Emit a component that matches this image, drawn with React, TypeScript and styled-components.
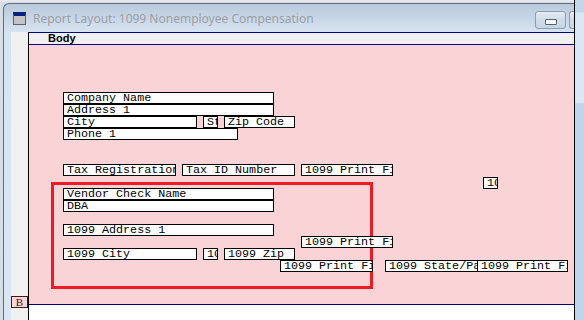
import { FC } from 'react';
import styled, { createGlobalStyle } from 'styled-components';

interface FieldData {
  text: string;
  x: number;
  y: number;
  w: number;
}

// positions are relative to the pink body section of the designer
const fields: FieldData[] = [
  { text: 'Company Name', x: 34, y: 47, w: 211 },
  { text: 'Address 1', x: 34, y: 59, w: 211 },
  { text: 'City', x: 34, y: 71, w: 134 },
  { text: 'State', x: 174, y: 71, w: 15 },
  { text: 'Zip Code', x: 195, y: 71, w: 71 },
  { text: 'Phone 1', x: 34, y: 83, w: 175 },
  { text: 'Tax Registration No.', x: 34, y: 119, w: 113 },
  { text: 'Tax ID Number', x: 153, y: 119, w: 113 },
  { text: '1099 Print Field', x: 272, y: 119, w: 92 },
  { text: '1099 Amount', x: 454, y: 132, w: 15 },
  { text: 'Vendor Check Name', x: 34, y: 143, w: 211 },
  { text: 'DBA', x: 34, y: 155, w: 211 },
  { text: '1099 Address 1', x: 34, y: 179, w: 211 },
  { text: '1099 Print Field', x: 272, y: 191, w: 92 },
  { text: '1099 City', x: 34, y: 203, w: 134 },
  { text: '1099 State', x: 174, y: 203, w: 15 },
  { text: '1099 Zip', x: 195, y: 203, w: 71 },
  { text: '1099 Print Field', x: 251, y: 215, w: 93 },
  { text: '1099 State/Payer No.', x: 356, y: 215, w: 93 },
  { text: '1099 Print Field', x: 448, y: 215, w: 91 },
];

const GlobalStyle = createGlobalStyle`
  html, body {
    margin: 0;
    padding: 0;
    background: #e3e9ef;
  }
  * {
    box-sizing: border-box;
  }
`;

const Screen = styled.div`
  width: 584px;
  height: 320px;
  overflow: hidden;
  display: flex;
  background: linear-gradient(90deg, #d3dbe4 0px, #e6ecf2 3px);
`;

const WindowArea = styled.div`
  width: 574px;
  padding: 3px 0 0 3px;
  background: linear-gradient(180deg, #e9edf1 0px, #d7dee6 3px);
`;

const Window = styled.div`
  height: 100%;
  display: flex;
  flex-direction: column;
  border-top-left-radius: 6px;
  border-left: 1px solid #5d6b7b;
  border-top: 1px solid #5d6b7b;
  background: linear-gradient(180deg, #b9cadc 0px, #d6e3f1 28px, #dbe7f4 100%);
`;

const TitleBar = styled.div`
  height: 28px;
  display: flex;
  align-items: center;
  padding: 0 0 0 9px;
`;

const TitleIcon = styled.div`
  width: 13px;
  height: 13px;
  border: 1px solid #5c6470;
  background: #c3c3c3;
  border-top: 4px solid #0a1f7a;
`;

const TitleText = styled.span`
  margin-left: 7px;
  font-family: 'Noto Sans', 'Open Sans', sans-serif;
  font-size: 12px;
  color: #9b9fa5;
  white-space: nowrap;
  flex: 1;
  margin-top: 1px;
`;

const CaptionButton = styled.div<{ $partial?: boolean }>`
  width: ${(p) => (p.$partial ? '5px' : '31px')};
  height: 18px;
  margin-left: ${(p) => (p.$partial ? '3px' : '0')};
  border: 1px solid #8d9cae;
  border-right: ${(p) => (p.$partial ? 'none' : '1px solid #8d9cae')};
  border-radius: ${(p) => (p.$partial ? '3px 0 0 3px' : '3px')};
  background: linear-gradient(180deg, #e4ecf5 0%, #cfdcea 50%, #c6d5e5 100%);
  display: flex;
  align-items: center;
  justify-content: center;
  align-self: flex-start;
  margin-top: 7px;
`;

const MinGlyph = styled.div`
  width: 12px;
  height: 6px;
  margin-top: 3px;
  border: 1px solid #5b5f66;
  border-radius: 1px;
  background: #fcfcfc;
`;

const ClientArea = styled.div`
  flex: 1;
  display: flex;
  margin-left: 7px;
`;

const Ruler = styled.div`
  width: 17px;
  background: #f0f0f0;
  display: flex;
  flex-direction: column;
  padding-top: 264px;
`;

const SectionTag = styled.div`
  width: 17px;
  height: 12px;
  border: 1px solid #3b1b1b;
  background: #fad3d7;
  font-family: 'Liberation Serif', serif;
  font-size: 11px;
  line-height: 10px;
  color: #3a1616;
  text-align: center;
`;

const Designer = styled.div`
  flex: 1;
  display: flex;
  flex-direction: column;
  border-left: 1px solid #000;
`;

const SectionHeader = styled.div`
  height: 13px;
  border-top: 1px solid #000080;
  border-bottom: 1px solid #000080;
  background: #f0f0f0;
  padding-left: 19px;
  font-family: 'Liberation Sans', Arial, sans-serif;
  font-size: 11px;
  font-weight: 700;
  line-height: 11px;
  color: #000;
`;

const Canvas = styled.div`
  position: relative;
  height: 260px;
  background: #fad3d7;
  border-bottom: 1px solid #000080;
`;

const Below = styled.div`
  flex: 1;
  background: #fff;
`;

const Highlight = styled.div`
  position: absolute;
  left: 22px;
  top: 137px;
  width: 322px;
  height: 107px;
  border: 3px solid #ed1c24;
`;

const Field = styled.div<{ $x: number; $y: number; $w: number }>`
  position: absolute;
  left: ${(p) => p.$x}px;
  top: ${(p) => p.$y}px;
  width: ${(p) => p.$w}px;
  height: 12px;
  border: 1px solid #000;
  background: #fff;
  padding-left: 3px;
  overflow: hidden;
  white-space: nowrap;
  font-family: 'Liberation Mono', 'Courier New', monospace;
  font-size: 11.7px;
  line-height: 10px;
  color: #000;
`;

const FrameStrip = styled.div`
  flex: 1;
  border-left: 1px solid #000;
  background: linear-gradient(
    180deg,
    #c3d7ec 0px,
    #c3d7ec 12px,
    #dae8f6 13px,
    #dae8f6 102px,
    #bed5ec 104px,
    #bed5ec 100%
  );
`;

const App: FC = () => {
  return (
    <>
      <GlobalStyle />
      <Screen>
        <WindowArea>
          <Window>
            <TitleBar>
              <TitleIcon />
              <TitleText>Report Layout: 1099 Nonemployee Compensation</TitleText>
              <CaptionButton>
                <MinGlyph />
              </CaptionButton>
              <CaptionButton $partial />
            </TitleBar>
            <ClientArea>
              <Ruler>
                <SectionTag>B</SectionTag>
              </Ruler>
              <Designer>
                <SectionHeader>Body</SectionHeader>
                <Canvas>
                  <Highlight />
                  {fields.map((f, i) => (
                    <Field key={i} $x={f.x} $y={f.y} $w={f.w}>
                      {f.text}
                    </Field>
                  ))}
                </Canvas>
                <Below />
              </Designer>
            </ClientArea>
          </Window>
        </WindowArea>
        <FrameStrip />
      </Screen>
    </>
  );
};

export default App;
